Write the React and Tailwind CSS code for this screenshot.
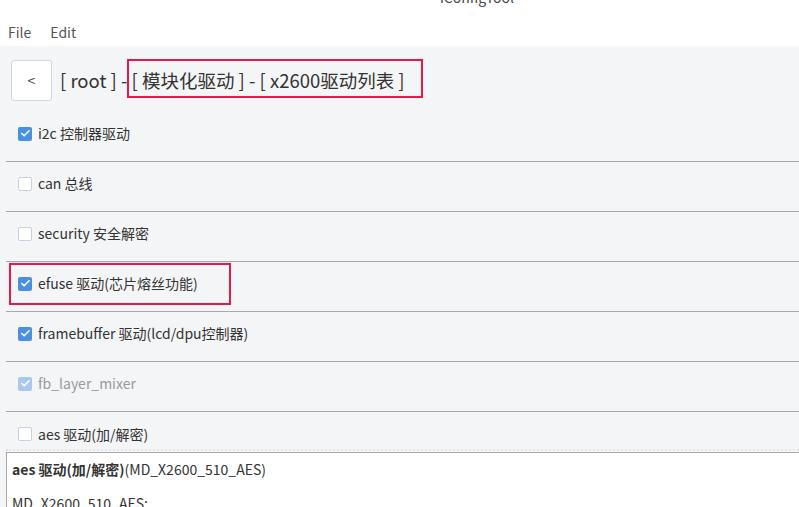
import { Check } from 'lucide-react';

const ITEMS = [
  { label: 'i2c 控制器驱动', checked: true },
  { label: 'can 总线', checked: false },
  { label: 'security 安全解密', checked: false },
  { label: 'efuse 驱动(芯片熔丝功能)', checked: true, marked: true },
  { label: 'framebuffer 驱动(lcd/dpu控制器)', checked: true },
  { label: 'fb_layer_mixer', checked: true, disabled: true },
];

function Box({ checked, disabled }) {
  if (checked) {
    return (
      <span className={`w-[14px] h-[14px] rounded-[2px] flex items-center justify-center shrink-0 ${disabled ? 'bg-[#a9c8ee]' : 'bg-[#4a90e2]'}`}>
        <Check className="w-[11px] h-[11px] text-white" strokeWidth={3.5} />
      </span>
    );
  }
  return <span className="w-[14px] h-[14px] rounded-[2px] bg-white border border-[#c9d0e3] shrink-0" />;
}

export default function App() {
  return (
    <div className="w-[799px] h-[507px] overflow-hidden bg-white text-[#333]" style={{ fontFamily: '"Noto Sans CJK SC", "Noto Sans", sans-serif' }}>
      {/* window title, cut at the top */}
      <div className="h-[14px] overflow-hidden relative">
        <div className="absolute left-[440px] -top-[13px] text-[14px] text-[#444]">iConfigTool</div>
      </div>

      <div className="h-[32px] flex items-center gap-[19px] px-[8px] pt-[4px] text-[14px] text-[#555]">
        <span>File</span>
        <span>Edit</span>
      </div>

      <div className="bg-[#f4f5f7] h-[461px] flex flex-col">
        <div className="h-[66px] shrink-0 flex items-start pt-[14px] pl-[11px] relative">
          <button className="w-[41px] h-[41px] bg-white border border-[#d6d6d6] rounded-[3px] text-[14px] text-[#444] flex items-center justify-center">
            &lt;
          </button>
          <span className="ml-[8px] mt-[6px] text-[18.5px] leading-[29px] text-[#333]">
            [ root ] - [ 模块化驱动 ] - [ x2600驱动列表 ]
          </span>
          <div className="absolute left-[127px] top-[13px] w-[296px] h-[39px] border-2 border-[#e8194a] pointer-events-none" />
        </div>

        <div className="shrink-0 ml-[6px]">
          {ITEMS.map((it) => (
            <div key={it.label} className="relative h-[50px] flex items-center pb-[6px] pl-[12px] gap-[6px] text-[14px] border-b border-[#a8a8a8]">
              <Box checked={it.checked} disabled={it.disabled} />
              <span className={it.disabled ? 'text-[#9a9a9a]' : 'text-[#333]'}>{it.label}</span>
              {it.marked && (
                <div className="absolute left-[3px] top-[1px] w-[222px] h-[42px] border-2 border-[#e8194a] pointer-events-none" />
              )}
            </div>
          ))}
          <div className="h-[37px] flex items-center pt-[7px] pl-[12px] gap-[6px] text-[14px]">
            <Box checked={false} />
            <span>aes 驱动(加/解密)</span>
          </div>
        </div>

        <div className="ml-[6px] h-[3px] border-t-2 border-dotted border-[#e3e5ea] shrink-0" />
        <div className="ml-[6px] flex-1 bg-white border-l border-t border-[#a8a8a8] px-[5px] pt-[6px] text-[14px] text-[#333]">
          <div><span className="font-bold">aes 驱动(加/解密)</span>(MD_X2600_510_AES)</div>
          <div className="mt-[13px]">MD_X2600_510_AES:</div>
        </div>
      </div>
    </div>
  );
}
